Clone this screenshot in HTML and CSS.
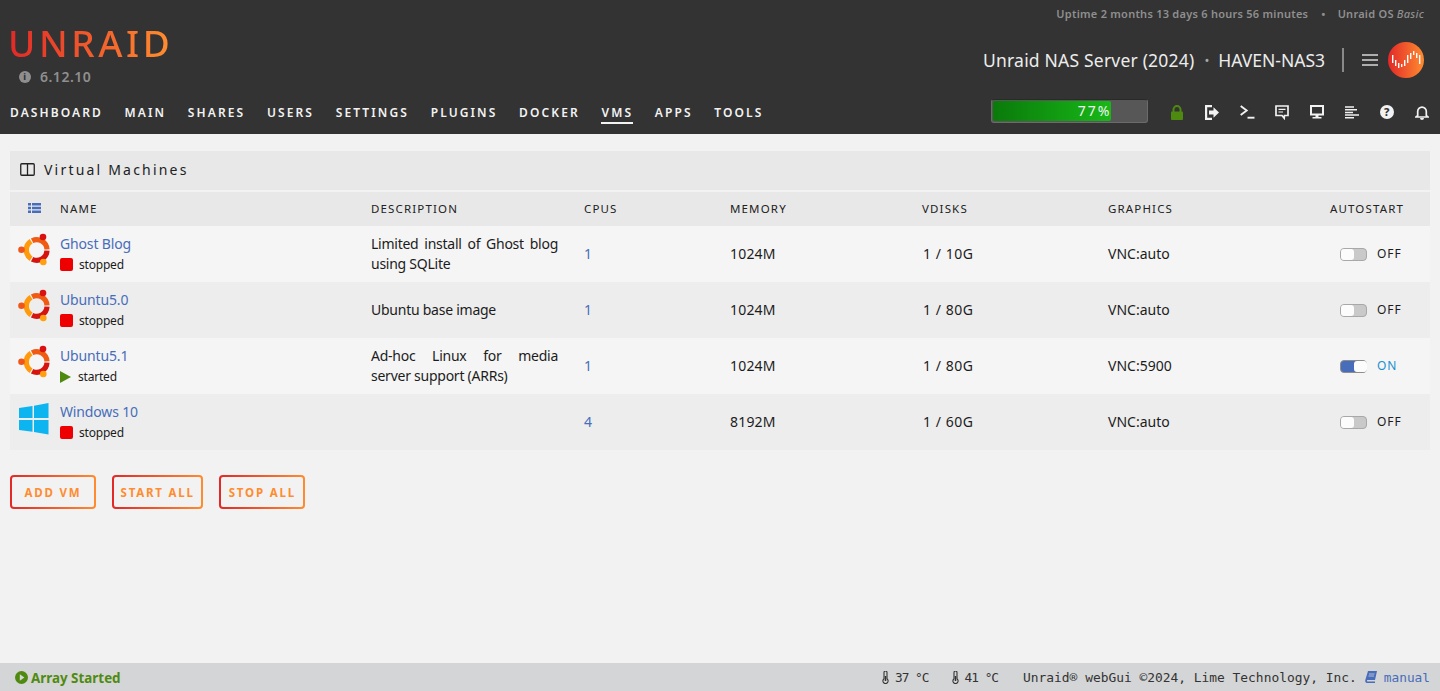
FILE: index.html
```html
<!DOCTYPE html>
<html lang="en">
<head>
<meta charset="utf-8">
<title>Unraid VMs</title>
<link rel="stylesheet" href="styles.css">
</head>
<body>
<header class="header">
  <div class="uptime">Uptime 2 months 13 days 6 hours 56 minutes<span class="dot">•</span>Unraid OS <em>Basic</em></div>
  <div class="brand-row">
    <div class="brand">
      <div class="logo">UNRAID</div>
      <div class="version"><span class="info">i</span>6.12.10</div>
    </div>
    <div class="server">
      <span class="server-desc">Unraid NAS Server (2024)</span>
      <span class="server-dot">•</span>
      <span class="server-name">HAVEN-NAS3</span>
      <span class="divider"></span>
      <svg class="burger" width="16" height="12" viewBox="0 0 16 12"><path d="M0 1h16M0 6h16M0 11h16" stroke="#d8d8d8" stroke-width="1.4"/></svg>
      <span class="avatar">
        <svg width="36" height="36" viewBox="0 0 36 36"><g fill="#fff"><rect x="4" y="13" width="1.4" height="8"/><rect x="7" y="18" width="1.4" height="6"/><rect x="10" y="21" width="1.4" height="5"/><rect x="13" y="22" width="1.4" height="3"/><rect x="16" y="18" width="1.4" height="6"/><rect x="19" y="13" width="1.4" height="8"/><rect x="22" y="11" width="1.4" height="6"/><rect x="25" y="9" width="1.4" height="4"/><rect x="28" y="11" width="1.4" height="5"/><rect x="31" y="13" width="1.4" height="9"/></g></svg>
      </span>
    </div>
  </div>
  <div class="nav-row">
    <nav class="nav">
      <a>Dashboard</a><a>Main</a><a>Shares</a><a>Users</a><a>Settings</a><a>Plugins</a><a>Docker</a><a class="active">VMs</a><a>Apps</a><a>Tools</a>
    </nav>
    <div class="tools">
      <div class="usage"><div class="usage-fill" style="width:77%"><span>77%</span></div></div>
      <div class="tool-icons">
        <svg width="14" height="15" viewBox="0 0 14 15"><path d="M3.500 7V4.600a3.500 3.500 0 0 1 7 0V7" fill="none" stroke="#4f8a10" stroke-width="2"/><rect x="1" y="6.500" width="12" height="8.500" rx="1" fill="#4f8a10"/></svg>
        <svg width="14" height="15" viewBox="0 0 14 15"><path d="M7 1.100H1.100v12.800H7" fill="none" stroke="#f2f2f2" stroke-width="2.200"/><path d="M4 5.500h4.500V2.300L14 7.500l-5.500 5.200V9.500H4z" fill="#f2f2f2"/></svg>
        <svg width="15" height="14" viewBox="0 0 15 14"><path d="M.700 1l6 4.500-6 4.500" fill="none" stroke="#f2f2f2" stroke-width="1.900"/><path d="M7.500 12.700h7" stroke="#f2f2f2" stroke-width="1.900"/></svg>
        <svg width="14" height="15" viewBox="0 0 14 15"><path d="M1 1h12v9.500H9.500l-.3 2.700L7 10.500H1z" fill="none" stroke="#f2f2f2" stroke-width="1.700"/><path d="M3.500 4.300h7M3.500 7h4.500" stroke="#f2f2f2" stroke-width="1.200"/></svg>
        <svg width="14" height="14" viewBox="0 0 14 14"><rect x="1" y="1" width="12" height="8.500" fill="none" stroke="#f2f2f2" stroke-width="2"/><path d="M5.500 10h3v2h-3zM2.500 12h9v1.500h-9z" fill="#f2f2f2"/></svg>
        <svg width="14" height="13" viewBox="0 0 14 13"><path d="M0 1h9M0 3.700h12M0 6.400h8M0 9.100h14M0 11.800h9" stroke="#f2f2f2" stroke-width="1.500"/></svg>
        <span class="help">?</span>
        <svg width="14" height="15" viewBox="0 0 14 15"><path d="M2.700 10.500V6.500a4.300 4.300 0 0 1 8.600 0v4l1.700 1.500H1z" fill="none" stroke="#f2f2f2" stroke-width="1.700"/><path d="M5 13h4a2 2 0 0 1-4 0z" fill="#f2f2f2"/></svg>
      </div>
    </div>
  </div>
</header>

<main class="content">
  <div class="title-bar">
    <svg width="15" height="13" viewBox="0 0 15 13"><rect x=".75" y=".75" width="13.500" height="11.500" rx="1" fill="none" stroke="#222" stroke-width="1.300"/><path d="M7.500 1v11" stroke="#222" stroke-width="1.300"/></svg>
    <span>Virtual Machines</span>
  </div>
  <table class="vms">
    <colgroup><col class="c-icon"><col class="c-name"><col class="c-desc"><col class="c-cpu"><col class="c-mem"><col class="c-disk"><col class="c-gfx"><col class="c-auto"></colgroup>
    <thead>
      <tr>
        <th class="list-cell"><svg width="13" height="10" viewBox="0 0 13 10"><path d="M0 0h3v2.600H0zM4 0h9v2.600H4zM0 3.700h3v2.600H0zM4 3.700h9v2.600H4zM0 7.400h3V10H0zM4 7.400h9V10H4z" fill="#486dba"/></svg></th>
        <th>Name</th><th>Description</th><th>CPUs</th><th>Memory</th><th>vDisks</th><th>Graphics</th><th>Autostart</th>
      </tr>
    </thead>
    <tbody>
      <tr>
        <td class="icon-cell"><svg class="ubuntu" width="34" height="34" viewBox="0 0 34 34"><g fill="none" stroke-width="5.200"><path d="M14.100 7.800A10.300 10.300 0 0 1 29 16.400" stroke="#f05a12"/><path d="M29 17.600A10.300 10.300 0 0 1 14.100 26.200" stroke="#d5130f"/><path d="M13.100 25.700A10.300 10.300 0 0 1 13.100 8.300" stroke="#ff9a0c"/></g><circle cx="25" cy="4" r="3.300" fill="#d9110f"/><circle cx="3.500" cy="16.700" r="3.300" fill="#f0561a"/><circle cx="25.300" cy="29" r="3.300" fill="#ffa010"/></svg></td>
        <td class="name-cell"><a class="vm-name">Ghost Blog</a><div class="state"><i class="stop"></i>stopped</div></td>
        <td class="desc">Limited install of Ghost blog using SQLite</td>
        <td class="link">1</td><td class="mem">1024M</td><td class="disk">1 / 10G</td><td>VNC:auto</td>
        <td class="auto"><span class="switch"><i class="knob"></i></span><span class="sw-label">OFF</span></td>
      </tr>
      <tr>
        <td class="icon-cell"><svg class="ubuntu" width="34" height="34" viewBox="0 0 34 34"><g fill="none" stroke-width="5.200"><path d="M14.100 7.800A10.300 10.300 0 0 1 29 16.400" stroke="#f05a12"/><path d="M29 17.600A10.300 10.300 0 0 1 14.100 26.200" stroke="#d5130f"/><path d="M13.100 25.700A10.300 10.300 0 0 1 13.100 8.300" stroke="#ff9a0c"/></g><circle cx="25" cy="4" r="3.300" fill="#d9110f"/><circle cx="3.500" cy="16.700" r="3.300" fill="#f0561a"/><circle cx="25.300" cy="29" r="3.300" fill="#ffa010"/></svg></td>
        <td class="name-cell"><a class="vm-name">Ubuntu5.0</a><div class="state"><i class="stop"></i>stopped</div></td>
        <td class="desc">Ubuntu base image</td>
        <td class="link">1</td><td class="mem">1024M</td><td class="disk">1 / 80G</td><td>VNC:auto</td>
        <td class="auto"><span class="switch"><i class="knob"></i></span><span class="sw-label">OFF</span></td>
      </tr>
      <tr>
        <td class="icon-cell"><svg class="ubuntu" width="34" height="34" viewBox="0 0 34 34"><g fill="none" stroke-width="5.200"><path d="M14.100 7.800A10.300 10.300 0 0 1 29 16.400" stroke="#f05a12"/><path d="M29 17.600A10.300 10.300 0 0 1 14.100 26.200" stroke="#d5130f"/><path d="M13.100 25.700A10.300 10.300 0 0 1 13.100 8.300" stroke="#ff9a0c"/></g><circle cx="25" cy="4" r="3.300" fill="#d9110f"/><circle cx="3.500" cy="16.700" r="3.300" fill="#f0561a"/><circle cx="25.300" cy="29" r="3.300" fill="#ffa010"/></svg></td>
        <td class="name-cell"><a class="vm-name">Ubuntu5.1</a><div class="state"><i class="play"></i>started</div></td>
        <td class="desc">Ad-hoc Linux for media server support (ARRs)</td>
        <td class="link">1</td><td class="mem">1024M</td><td class="disk">1 / 80G</td><td>VNC:5900</td>
        <td class="auto"><span class="switch on"><i class="knob"></i></span><span class="sw-label on">ON</span></td>
      </tr>
      <tr>
        <td class="icon-cell"><svg class="windows" width="30" height="32" viewBox="0 0 30 32"><g fill="#0cb4f0"><path d="M0 5l13.500-2v12H0z"/><path d="M15 2.700L29.500 0v15H15z"/><path d="M0 17h13.500v11.800L0 27z"/><path d="M15 17h14.500v14.500L15 29z"/></g></svg></td>
        <td class="name-cell"><a class="vm-name">Windows 10</a><div class="state"><i class="stop"></i>stopped</div></td>
        <td class="desc"></td>
        <td class="link">4</td><td class="mem">8192M</td><td class="disk">1 / 60G</td><td>VNC:auto</td>
        <td class="auto"><span class="switch"><i class="knob"></i></span><span class="sw-label">OFF</span></td>
      </tr>
    </tbody>
  </table>
  <div class="actions">
    <button class="btn">Add VM</button>
    <button class="btn">Start All</button>
    <button class="btn">Stop All</button>
  </div>
</main>

<footer class="footer">
  <div class="array">
    <svg width="13" height="13" viewBox="0 0 13 13"><circle cx="6.500" cy="6.500" r="6.500" fill="#4f8a10"/><path d="M4.800 3.300l4.600 3.200-4.600 3.200z" fill="#d4d5d6"/></svg>
    <span>Array Started</span>
  </div>
  <div class="foot-right">
    <span class="temp"><svg width="8" height="13" viewBox="0 0 8 13"><path d="M2 1.500a1.500 1.500 0 0 1 3 0v6.300a2.600 2.600 0 1 1-3 0z" fill="none" stroke="#333" stroke-width="1.100"/><path d="M3.500 5v5" stroke="#333" stroke-width="1.500"/></svg>37 °C</span>
    <span class="temp"><svg width="8" height="13" viewBox="0 0 8 13"><path d="M2 1.500a1.500 1.500 0 0 1 3 0v6.300a2.600 2.600 0 1 1-3 0z" fill="none" stroke="#333" stroke-width="1.100"/><path d="M3.500 5v5" stroke="#333" stroke-width="1.500"/></svg>41 °C</span>
    <span class="copy">Unraid® webGui ©2024, Lime Technology, Inc.</span>
    <a class="manual"><svg width="12" height="12" viewBox="0 0 12 12"><path d="M3 0h9l-2 9H2.500C1.800 9 1.700 10.500 2.500 10.500H10V12H2C.5 12 0 10.500.3 9z" fill="#486dba"/><path d="M4 3h5.500M3.500 5h5.500" stroke="#d4d5d6" stroke-width=".8"/></svg>manual</a>
  </div>
</footer>
</body>
</html>
```

FILE: styles.css
```css
* { box-sizing: border-box; }
html, body { height: 100%; }
body {
  margin: 0;
  height: 691px;
  overflow: hidden;
  display: flex;
  flex-direction: column;
  background: #f2f2f2;
  color: #1c1c1c;
  font-family: "Noto Sans", "Open Sans", sans-serif;
  font-size: 14px;
}

/* Header */
.header {
  height: 134px;
  flex: none;
  background: #333;
  padding: 0 16px 0 10px;
  display: flex;
  flex-direction: column;
}
.uptime {
  height: 27px;
  padding-top: 6px;
  text-align: right;
  font-size: 11px;
  line-height: 16px;
  font-weight: 600;
  color: #8f8f8f;
  letter-spacing: .25px;
}
.uptime .dot { margin: 0 12px 0 13px; }
.uptime em { font-weight: 500; }
.brand-row {
  height: 62px;
  display: flex;
  justify-content: space-between;
}
.logo {
  font-family: "Noto Sans", sans-serif;
  font-size: 37px;
  font-weight: 500;
  line-height: 31px;
  letter-spacing: 3.600px;
  width: fit-content;
  margin-left: -2px;
  background: linear-gradient(90deg, #e22828, #ff8c2f 97%);
  -webkit-background-clip: text;
  background-clip: text;
  color: transparent;
}
.version {
  display: flex;
  align-items: center;
  margin: 11px 0 0 9px;
  font-size: 14px;
  line-height: 16px;
  font-weight: 600;
  color: #8f8f8f;
  letter-spacing: .5px;
}
.info {
  width: 12px;
  height: 12px;
  margin-right: 9px;
  border-radius: 50%;
  background: #8f8f8f;
  color: #333;
  font-size: 9px;
  line-height: 12px;
  font-weight: 800;
  text-align: center;
}
.server {
  display: flex;
  align-items: center;
  height: 36px;
  margin-top: 15px;
  color: #ececec;
  font-size: 17.500px;
}
.server-desc { letter-spacing: .2px; }
.server-dot { margin: 0 9px 0 10px; font-size: 13px; color: #a8a8a8; }
.divider { width: 2px; height: 24px; margin: 0 18px 0 17px; background: #8a8a8a; }
.burger { margin-right: 10px; }
.avatar {
  width: 36px;
  height: 36px;
  display: block;
  border-radius: 50%;
  background: linear-gradient(90deg, #e22828, #ff8c2f);
}
.avatar svg { display: block; }

/* Nav */
.nav-row {
  flex: 1;
  display: flex;
  justify-content: space-between;
  margin-right: -15px;
}
.nav { display: flex; gap: 23.800px; padding-top: 15px; }
.nav a {
  height: 20px;
  color: #f2f2f2;
  font-size: 12px;
  line-height: 18px;
  font-weight: 600;
  letter-spacing: 2.100px;
  text-transform: uppercase;
  margin-right: -2.100px;
}
.nav a.active { border-bottom: 2px solid #f2f2f2; }
.tools { display: flex; padding-top: 10px; }
.usage {
  width: 157px;
  height: 24px;
  padding: 1px;
  margin-right: 23px;
  border-radius: 3px;
  background: #575757;
  border: 1px solid #6b6b6b;
  border-top-color: #2a2a2a;
}
.usage-fill {
  height: 100%;
  border-radius: 2px;
  background: linear-gradient(90deg, #0a7a0a, #18b818);
  text-align: right;
  color: #f2f2f2;
  font-size: 14px;
  line-height: 20px;
  letter-spacing: 1.900px;
  padding-right: 0;
}
.tool-icons {
  display: grid;
  grid-template-columns: repeat(8, 34.900px);
  justify-items: center;
  align-items: center;
  height: 24px;
  margin: 1px 0 0 -11.500px;
}
.help {
  width: 14px;
  height: 14px;
  border-radius: 50%;
  background: #f2f2f2;
  color: #333;
  font-size: 11px;
  line-height: 14px;
  font-weight: 800;
  text-align: center;
}

/* Content */
.content { flex: 1; padding: 17px 10px 0; }
.title-bar {
  height: 39px;
  display: flex;
  align-items: center;
  gap: 9px;
  padding: 0 0 2px 10px;
  background: #e8e8e8;
  font-size: 14px;
  letter-spacing: 2.200px;
  color: #222;
}
.vms {
  width: 100%;
  margin-top: 2px;
  table-layout: fixed;
  border-collapse: collapse;
}
.c-icon { width: 50px; }
.c-name { width: 311px; }
.c-desc { width: 213px; }
.c-cpu { width: 146px; }
.c-mem { width: 192px; }
.c-disk { width: 186px; }
.c-gfx { width: 222px; }
.c-auto { width: 100px; }
.vms th {
  height: 34px;
  padding: 0 0 2px;
  background: #e8e8e8;
  text-align: left;
  font-size: 11.500px;
  font-weight: 400;
  letter-spacing: 1.150px;
  text-transform: uppercase;
  color: #222;
}
.vms th.list-cell { padding-left: 18px; }
.list-cell svg { display: block; }
.vms td { height: 56px; padding: 0; vertical-align: middle; font-size: 14px; line-height: 20px; }
.vms tbody tr:nth-child(odd) { background: #f5f5f5; }
.vms tbody tr:nth-child(even) { background: #ededed; }
.vms td.icon-cell { vertical-align: top; }
.ubuntu { display: block; margin: 7px 0 0 8px; }
.windows { display: block; margin: 9px 0 0 9px; }
.vm-name { color: #486dba; line-height: 20px; display: block; letter-spacing: -.15px; margin-top: -1px; }
.state { display: flex; align-items: center; margin-top: 2px; font-size: 12px; line-height: 18px; letter-spacing: -.2px; }
.stop { width: 13px; height: 13px; margin-right: 6px; border-radius: 2px; background: #ef0000; }
.play {
  width: 0;
  height: 0;
  margin-right: 7px;
  border-left: 11.500px solid #4f8a10;
  border-top: 6.500px solid transparent;
  border-bottom: 6.500px solid transparent;
}
.desc { text-align: justify; padding-right: 26px !important; letter-spacing: -.25px; }
.link { color: #486dba; }
.mem { letter-spacing: .2px; }
.disk { letter-spacing: .55px; padding-left: 1px !important; }
.switch {
  display: inline-block;
  vertical-align: middle;
  position: relative;
  width: 27px;
  height: 13px;
  margin: 0 10px 1px 10px;
  border-radius: 4px;
  border: 1px solid #a8a8a8;
  background: #c9c9c9;
}
.knob {
  position: absolute;
  left: 0;
  top: 0;
  width: 13px;
  height: 11px;
  border-radius: 3px;
  background: #fcfcfc;
}
.switch.on { background: #486dba; border-color: #8d8d8d; }
.switch.on .knob { left: 13px; }
.sw-label { font-size: 12px; letter-spacing: 1px; vertical-align: middle; }
.sw-label.on { color: #1c8fd0; }

/* Buttons */
.actions { display: flex; gap: 16px; margin-top: 25px; }
.btn {
  height: 34px;
  padding: 0 6.500px;
  min-width: 86px;
  border: 2px solid transparent;
  border-radius: 4px;
  background: linear-gradient(#f2f2f2, #f2f2f2) padding-box, linear-gradient(90deg, #e22828, #ff8c2f) border-box;
  color: #ff8c2f;
  font-family: "Noto Sans", sans-serif;
  font-size: 11.500px;
  font-weight: 700;
  letter-spacing: 1.800px;
  text-transform: uppercase;
}

/* Footer */
.footer {
  flex: none;
  height: 28px;
  display: flex;
  justify-content: space-between;
  align-items: center;
  padding: 1px 10px 0 15px;
  background: #d4d5d6;
}
.array { display: flex; align-items: center; gap: 3px; color: #4f8a10; font-weight: 700; font-size: 13.400px; }
.foot-right {
  display: flex;
  align-items: center;
  color: #333;
  font-family: "DejaVu Sans Mono", monospace;
  font-size: 12.800px;
  white-space: nowrap;
  margin-top: -1px;
}
.temp { display: flex; align-items: center; gap: 5px; margin-right: 23px; letter-spacing: -1px; }
.temp svg { margin-top: 1px; }
.copy { margin-left: 2px; margin-right: 8px; font-size: 12.900px; }
.manual { display: flex; align-items: center; gap: 7px; color: #486dba; }
```
